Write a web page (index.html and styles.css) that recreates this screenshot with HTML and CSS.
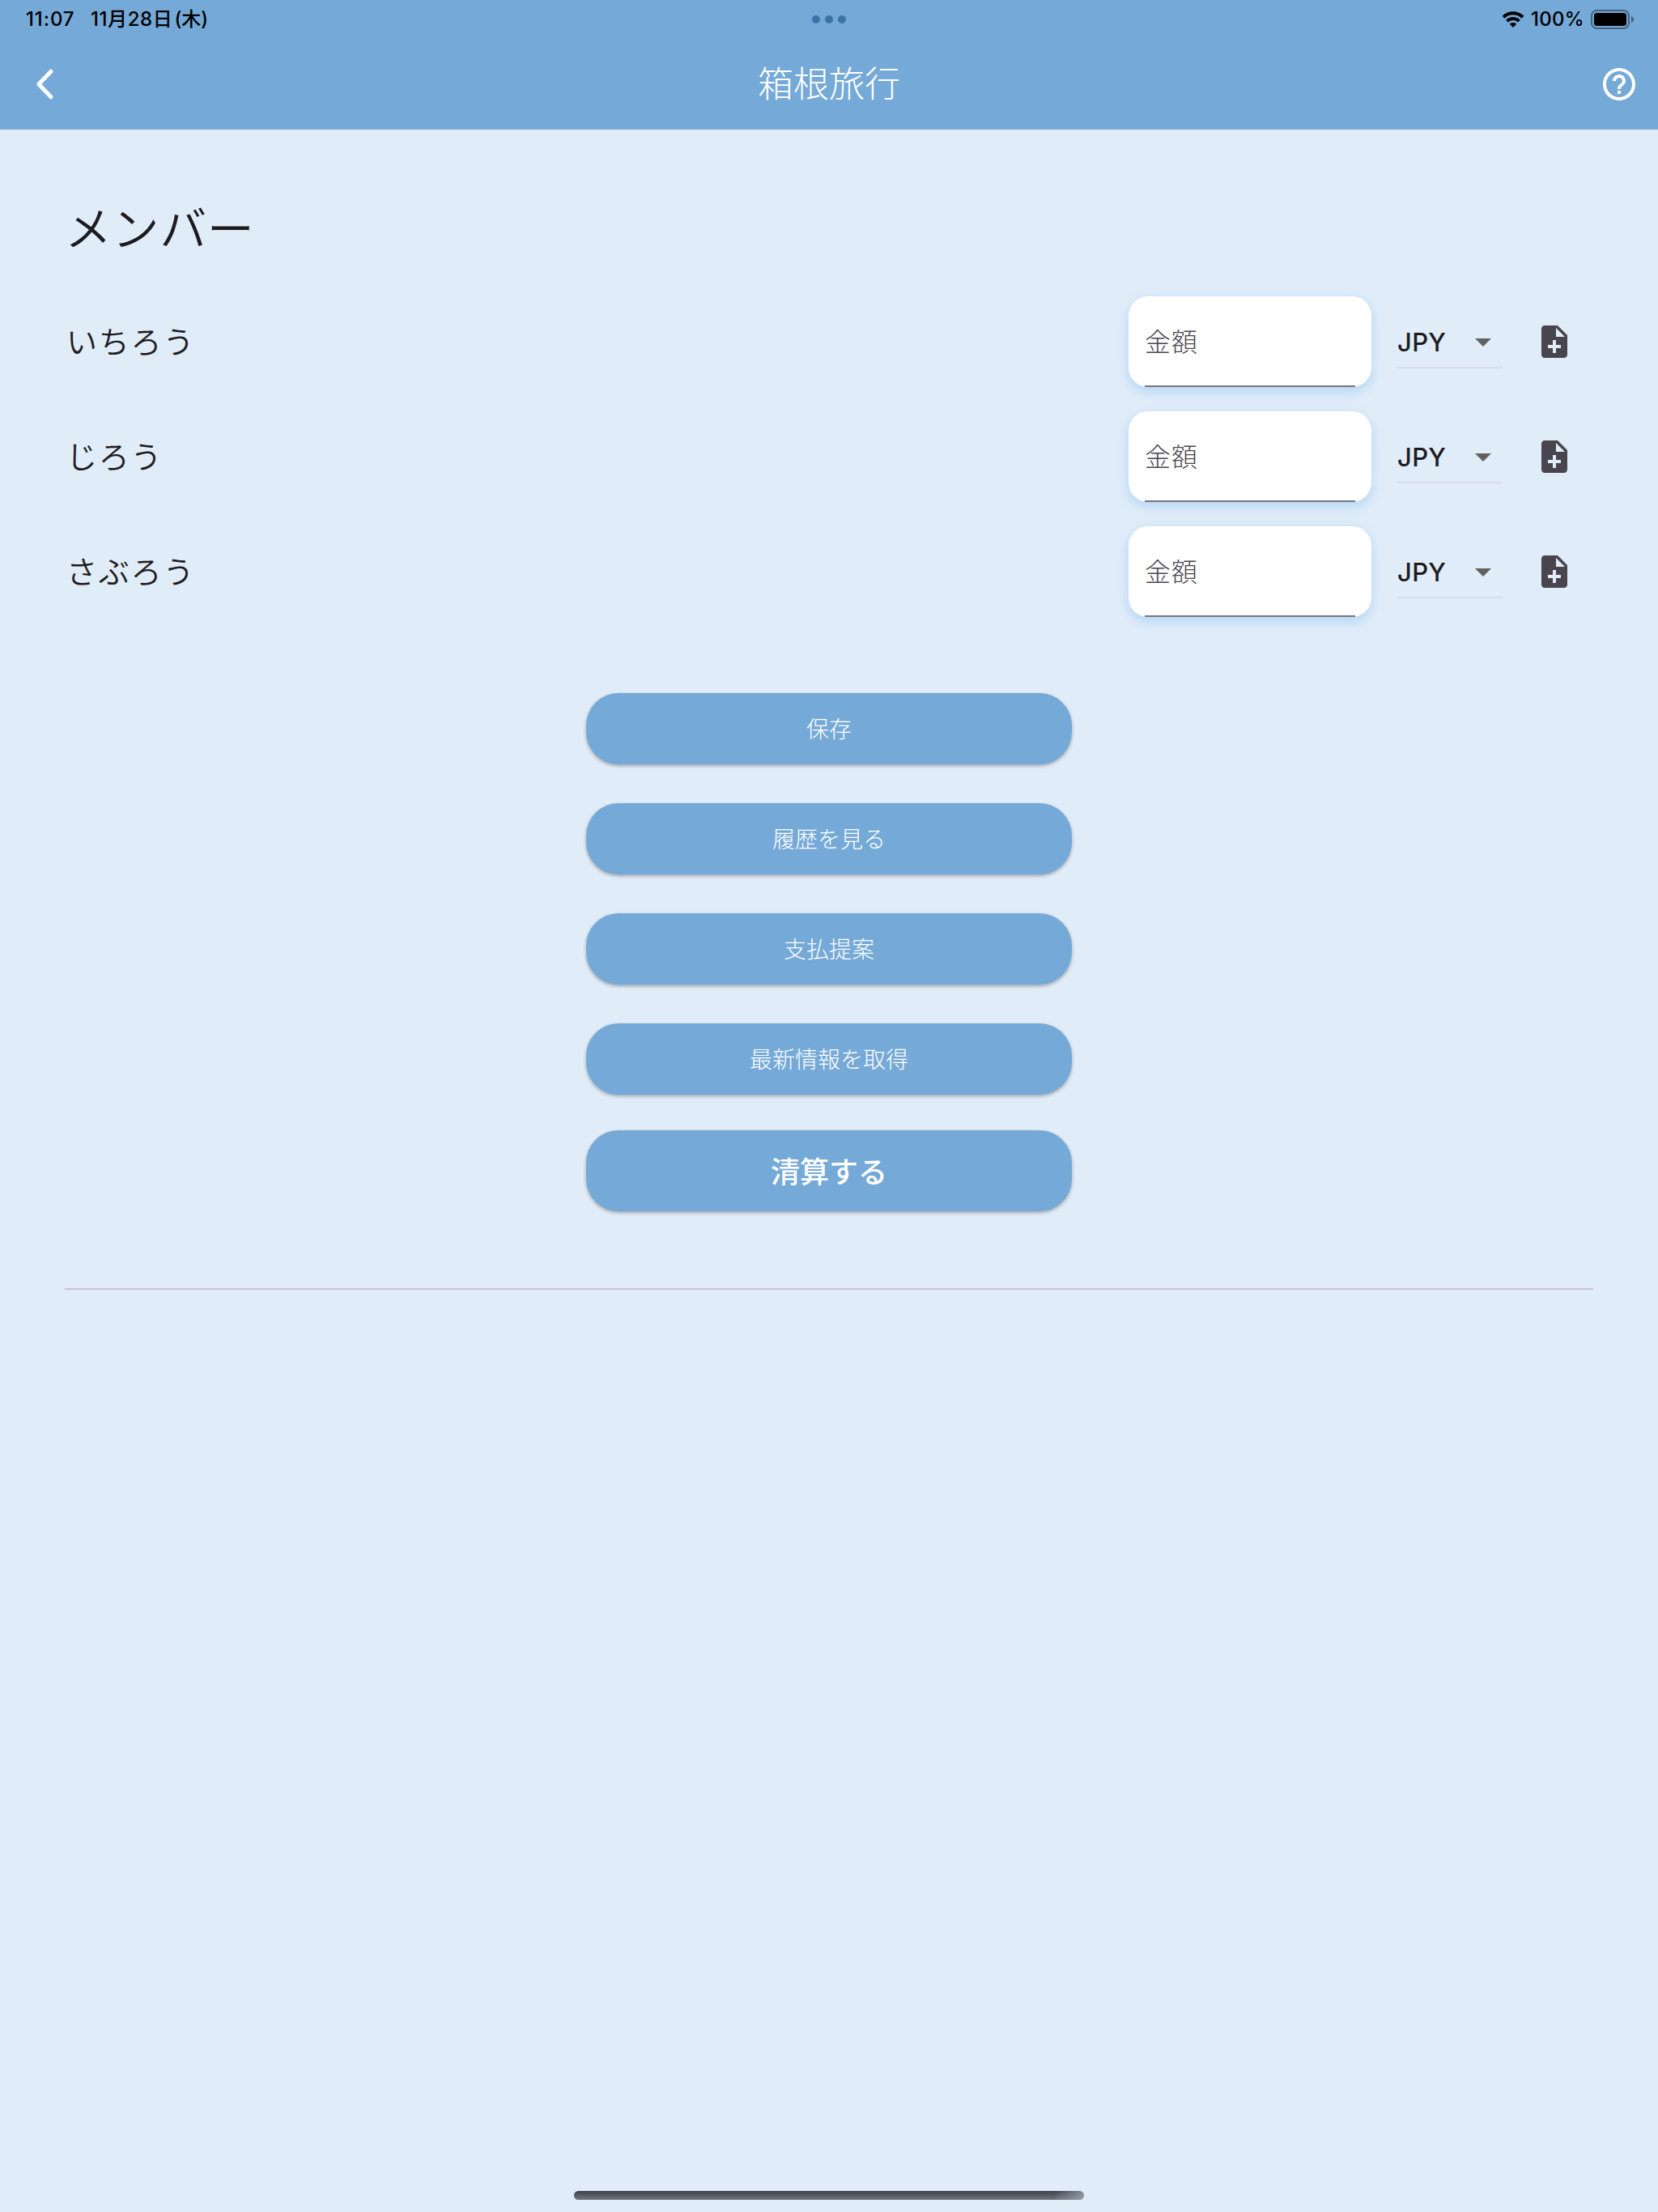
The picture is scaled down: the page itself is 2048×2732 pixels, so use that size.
FILE: index.html
```html
<!DOCTYPE html>
<html lang="ja">
<head>
<meta charset="utf-8">
<title>箱根旅行</title>
<link rel="stylesheet" href="styles.css">
</head>
<body>
<svg class="defs" width="0" height="0" aria-hidden="true">
  <symbol id="note-add" viewBox="0 0 24 24"><path d="M14 2H6c-1.1 0-1.99.9-1.99 2L4 20c0 1.1.89 2 1.99 2H18c1.1 0 2-.9 2-2V8l-6-6zm2 14h-3v3h-2v-3H8v-2h3v-3h2v3h3v2zm-3-7V3.500l5.500 5.500H13z"/></symbol>
  <symbol id="drop-down" viewBox="0 0 24 24"><path d="M7 10l5 5 5-5z"/></symbol>
</svg>
<header class="header">
  <div class="status">
    <div class="status-left"><span class="time">11:07</span><span class="date">11月28日<span class="day">(木)</span></span></div>
    <div class="dots"><i></i><i></i><i></i></div>
    <div class="status-right">
      <svg class="wifi" viewBox="0 0 28 20"><path d="M2 7.200C8.800.600 19.200.600 26 7.200M6.600 12C10.800 8 17.200 8 21.400 12" fill="none" stroke="#000" stroke-width="4"/><path d="M9.700 15.600c2.500-2.200 6.100-2.200 8.600 0L14 20z"/></svg>
      <span class="percent">100%</span>
      <svg class="battery" viewBox="0 0 54 24"><rect x="1" y="1" width="46" height="22" rx="6.500" fill="none" stroke="#000" stroke-opacity=".42" stroke-width="2"/><rect x="4" y="4" width="40" height="16" rx="3.500"/><path d="M50 8c4 1.500 4 6.500 0 8z" fill-opacity=".45"/></svg>
    </div>
  </div>
  <div class="appbar">
    <svg class="back" viewBox="0 0 48 48"><path d="M32 8.200 16.800 24 32 39.800"/></svg>
    <h1 class="title">箱根旅行</h1>
    <svg class="help" viewBox="0 0 24 24"><path d="M11 18h2v-2h-2v2zm1-16C6.480 2 2 6.480 2 12s4.480 10 10 10 10-4.480 10-10S17.520 2 12 2zm0 18c-4.410 0-8-3.590-8-8s3.590-8 8-8 8 3.590 8 8-3.590 8-8 8zm0-14c-2.210 0-4 1.790-4 4h2c0-1.100.9-2 2-2s2 .9 2 2c0 2-3 1.750-3 5h2c0-2.250 3-2.500 3-5 0-2.210-1.790-4-4-4z"/></svg>
  </div>
</header>
<main class="main">
  <h2 class="heading">メンバー</h2>
  <section class="members">
    <div class="member"><span class="name">いちろう</span><div class="amount"><span class="amount-label">金額</span></div><div class="currency"><span>JPY</span><svg class="icon caret"><use href="#drop-down"/></svg></div><svg class="icon note"><use href="#note-add"/></svg></div>
    <div class="member"><span class="name">じろう</span><div class="amount"><span class="amount-label">金額</span></div><div class="currency"><span>JPY</span><svg class="icon caret"><use href="#drop-down"/></svg></div><svg class="icon note"><use href="#note-add"/></svg></div>
    <div class="member"><span class="name">さぶろう</span><div class="amount"><span class="amount-label">金額</span></div><div class="currency"><span>JPY</span><svg class="icon caret"><use href="#drop-down"/></svg></div><svg class="icon note"><use href="#note-add"/></svg></div>
  </section>
  <section class="actions">
    <button class="button">保存</button>
    <button class="button">履歴を見る</button>
    <button class="button">支払提案</button>
    <button class="button">最新情報を取得</button>
    <button class="button button-primary">清算する</button>
  </section>
  <hr class="divider">
</main>
<footer class="footer"><div class="home-indicator"></div></footer>
</body>
</html>
```
FILE: styles.css
```css
* { box-sizing: border-box; }
body {
  margin: 0;
  width: 2048px;
  height: 2732px;
  display: flex;
  flex-direction: column;
  background: #e0ecf8;
  color: #1d1b20;
  font-family: Inter, "Noto Sans CJK JP", sans-serif;
}
.defs { display: block; width: 0; height: 0; position: absolute; }
.header { height: 160px; background: #75a9d7; }
.status {
  height: 48px;
  display: grid;
  grid-template-columns: 1fr auto 1fr;
  align-items: center;
  padding: 0 29px 0 32px;
  color: #000;
  font-size: 24px;
  font-weight: 500;
  line-height: 48px;
}
.status-left { display: flex; gap: 20px; letter-spacing: .6px; }
.time { width: 60px; letter-spacing: .9px; }
.date { white-space: nowrap; font-weight: 450; }
.day { margin-left: 2px; letter-spacing: 0; }
.dots { display: flex; gap: 6px; margin-left: -3px; }
.dots i { width: 10px; height: 10px; border-radius: 50%; background: #3973a8; }
.status-right { display: flex; align-items: center; justify-content: flex-end; }
.wifi { width: 28px; height: 20px; margin-right: 8px; }
.percent { width: 74px; white-space: nowrap; font-weight: 450; letter-spacing: .3px; }
.battery { width: 54px; height: 24px; }
.appbar {
  height: 112px;
  display: grid;
  grid-template-columns: 48px 1fr 48px;
  align-items: center;
  padding: 0 24px 0 31px;
}
.back { width: 48px; height: 48px; fill: none; stroke: #fff; stroke-width: 5; stroke-linecap: round; stroke-linejoin: round; }
.help { width: 48px; height: 48px; fill: #fff; }
.title { margin: 0 0 0 -7px; text-align: center; color: #fff; font-size: 44px; font-weight: 300; line-height: 64px; }
.main { flex: 1; padding: 83px 80px 0; }
.heading { margin: 0; height: 80px; font-size: 58px; font-weight: 350; line-height: 80px; letter-spacing: .6px; }
.members { display: flex; flex-direction: column; gap: 30px; margin-top: 43px; }
.member { height: 112px; display: flex; align-items: center; padding-right: 24px; }
.name { flex: 1; padding: 0 0 5px 2px; font-size: 38px; font-weight: 350; letter-spacing: 1.8px; }
.amount {
  width: 300px;
  height: 112px;
  padding: 0 20px;
  border-radius: 24px;
  background: #fff;
  box-shadow: 0 4px 20px rgba(33, 150, 243, .08), 0 6px 12px rgba(33, 150, 243, .16);
}
.amount-label {
  display: block;
  height: 112px;
  border-bottom: 2px solid #79747e;
  color: #49454f;
  font-size: 32px;
  font-weight: 300;
  line-height: 114px;
  letter-spacing: 1px;
}
.currency {
  width: 130px;
  height: 66px;
  margin: 0 40px 0 32px;
  display: flex;
  align-items: center;
  justify-content: space-between;
  border-bottom: 2px solid #d6dde8;
  font-size: 31px;
  font-weight: 500;
  line-height: 40px;
  letter-spacing: .3px;
}
.currency span { padding-top: 3px; }
.icon { width: 48px; height: 48px; }
.caret { fill: #616161; margin-top: 2px; }
.note { fill: #49454f; }
.actions { display: flex; flex-direction: column; align-items: center; gap: 48px; margin-top: 94px; }
.button {
  width: 600px;
  height: 88px;
  padding: 0 0 2px;
  border: 0;
  border-radius: 40px;
  background: #75a9d7;
  box-shadow: 0 2px 4px rgba(0, 0, 0, .3);
  color: #fff;
  font: 300 28px/86px "Noto Sans CJK JP", sans-serif;
}
.button-primary { height: 100px; margin-top: -4px; font-size: 36px; font-weight: 500; line-height: 98px; }
.divider { height: 2px; margin: 95px 0 0; border: 0; background: #cac4d0; }
.footer { height: 26px; display: flex; justify-content: center; }
.home-indicator {
  width: 630px;
  height: 11px;
  border-radius: 6px;
  background: linear-gradient(100deg, transparent 94%, rgba(160, 170, 182, .75) 100%), linear-gradient(#3d4148, #70767e);
}
```
